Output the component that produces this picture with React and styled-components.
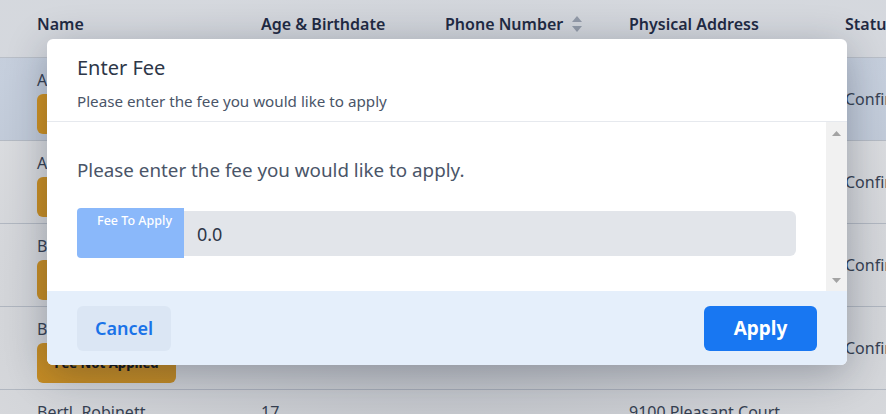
import React from 'react';
import styled, { createGlobalStyle } from 'styled-components';

const GlobalStyle = createGlobalStyle`
    html, body {
        margin: 0;
        padding: 0;
        width: 886px;
        height: 414px;
        overflow: hidden;
        font-family: "Noto Sans", "Open Sans", sans-serif;
        background: #ffffff;
    }
`
const Page = styled.div`
    position: relative;
    width: 886px;
    height: 414px;
    overflow: hidden;
`
const Table = styled.div`
    display: flex;
    flex-direction: column;
    color: #2d3748;
`
const Row = styled.div`
    display: grid;
    grid-template-columns: 224px 184px 184px 216px 1fr;
    padding-left: 37px;
    height: ${p => p.head ? '58px' : '83px'};
    align-items: center;
    background: ${p => p.head ? '#f4f6f9' : p.selected ? '#e2ebf8' : '#ffffff'};
    border-bottom: 1px solid #d3d8df;
    white-space: nowrap;
    box-sizing: border-box;
`
const HeadCell = styled.div`
    font-size: 16px;
    font-weight: 600;
    color: #1f2a44;
    display: flex;
    align-items: center;
    gap: 8px;
    margin-top: -10px;
`
const Cell = styled.div`
    align-self: ${p => p.top ? 'start' : 'center'};
    padding-top: ${p => p.top ? '10px' : '0'};
    display: flex;
    flex-direction: column;
    font-size: 16px;
    line-height: 24px;
    color: #3a4556;
`
const NameCell = styled.div`
    align-self: start;
    padding-top: 10px;
    display: flex;
    flex-direction: column;
    align-items: flex-start;
    gap: 2px;
    font-size: 16px;
    line-height: 24px;
    color: #3a4556;
`
const Badge = styled.span`
    display: inline-block;
    width: 139px;
    line-height: 40px;
    text-align: center;
    background: #f0a51c;
    border-radius: 6px;
    font-size: 13px;
    font-weight: 800;
    color: #111;
`
const SortIcon = styled.svg`
    width: 12px;
    height: 18px;
`
const Overlay = styled.div`
    position: absolute;
    inset: 0;
    background: radial-gradient(ellipse 70% 80% at 50% 75%, rgba(35, 45, 65, 0.32), rgba(35, 45, 65, 0.15));
`
const Modal = styled.div`
    position: absolute;
    left: 47px;
    top: 39px;
    width: 800px;
    height: 326px;
    background: #ffffff;
    border-radius: 6px;
    overflow: hidden;
    display: flex;
    flex-direction: column;
    box-shadow: 0 8px 40px rgba(20, 30, 50, 0.3);
`
const Header = styled.div`
    padding: 14px 30px 0;
    height: 83px;
    box-sizing: border-box;
    border-bottom: 1px solid #e6e9ee;
`
const Title = styled.h2`
    margin: 0;
    font-size: 20px;
    font-weight: 400;
    color: #2d3748;
    line-height: 30px;
`
const Subtitle = styled.p`
    margin: 8px 0 0;
    font-size: 15.2px;
    color: #4a5568;
    line-height: 20px;
`
const Body = styled.div`
    height: 169px;
    display: flex;
`
const BodyContent = styled.div`
    flex: 1;
    padding: 0 30px;
    overflow: hidden;
`
const ScrollTrack = styled.div`
    width: 21px;
    background: #f1f1f1;
    display: flex;
    flex-direction: column;
    justify-content: space-between;
    align-items: center;
    padding: 9px 0 8px;
    box-sizing: border-box;
`
const ScrollArrow = styled.svg`
    width: 9px;
    height: 5px;
    display: block;
`
const Lead = styled.p`
    margin: 34px 0 0;
    font-size: 18.8px;
    color: #4a5568;
    line-height: 28px;
`
const InputGroup = styled.div`
    display: flex;
    align-items: center;
    margin-top: 24px;
`
const GroupLabel = styled.label`
    width: 107px;
    height: 50px;
    box-sizing: border-box;
    background: #8ab8fa;
    color: #ffffff;
    border-radius: 4px 0 0 4px;
    font-size: 12.5px;
    font-weight: 500;
    text-align: right;
    padding: 4px 12px 0 0;
`
const FeeInput = styled.input`
    flex: 1;
    height: 45px;
    box-sizing: border-box;
    border: none;
    border-radius: 0 6px 6px 0;
    background: #e2e5ea;
    font-family: inherit;
    font-size: 18px;
    color: #2d3748;
    padding: 2px 13px 0;
    outline: none;
`
const Footer = styled.div`
    flex: 1;
    background: #e5effb;
    display: flex;
    justify-content: space-between;
    align-items: center;
    padding: 0 30px;
`
const Button = styled.button`
    height: 45px;
    width: ${p => p.primary ? '113px' : '94px'};
    border: none;
    border-radius: 6px;
    font-family: inherit;
    font-size: ${p => p.primary ? '19px' : '18px'};
    font-weight: ${p => p.primary ? 700 : 600};
    color: ${p => p.primary ? '#ffffff' : '#1a73e8'};
    background: ${p => p.primary ? '#1877f2' : '#dbe6f4'};
    cursor: pointer;
`

const rows = [
    { name: 'Abbe, Marlow', age: '17', birth: '02/11/2007', phone: '(555) 201-4432', address: '41 Elm Street', city: 'Springfield, IL', status: 'Confirmed', selected: true },
    { name: 'Adler, Kirsten', age: '16', birth: '09/23/2008', phone: '(555) 318-9021', address: '7 Harbor Lane', city: 'Springfield, IL', status: 'Confirmed' },
    { name: 'Baird, Jolene', age: '17', birth: '05/02/2007', phone: '(555) 774-1209', address: '220 Oak Avenue', city: 'Springfield, IL', status: 'Confirmed' },
    { name: 'Barlow, Terrence', age: '18', birth: '01/17/2006', phone: '(555) 602-3348', address: '15 Birch Road', city: 'Springfield, IL', status: 'Confirmed' },
    { name: 'Bertl, Robinett', age: '17', birth: '11/30/2007', phone: '(555) 980-1156', address: '9100 Pleasant Court', city: 'Springfield, IL', status: 'Confirmed', last: true },
]

function App(){
    return (
        <Page>
            <GlobalStyle />
            <Table>
                <Row head>
                    <HeadCell>Name</HeadCell>
                    <HeadCell>Age &amp; Birthdate</HeadCell>
                    <HeadCell>
                        Phone Number
                        <SortIcon viewBox="0 0 12 18">
                            <path d="M6 1 L11 7 H1 Z" fill="#a8b0bc" />
                            <path d="M6 17 L11 11 H1 Z" fill="#a8b0bc" />
                        </SortIcon>
                    </HeadCell>
                    <HeadCell>Physical Address</HeadCell>
                    <HeadCell>Status</HeadCell>
                </Row>
                {rows.map(r => (
                    <Row key={r.name} selected={r.selected}>
                        <NameCell>
                            {r.name}
                            {!r.last && <Badge>Fee Not Applied</Badge>}
                        </NameCell>
                        <Cell top>
                            <span>{r.age}</span>
                            <span>{r.birth}</span>
                        </Cell>
                        <Cell>{r.phone}</Cell>
                        <Cell top>
                            <span>{r.address}</span>
                            <span>{r.city}</span>
                        </Cell>
                        <Cell>{r.status}</Cell>
                    </Row>
                ))}
            </Table>
            <Overlay />
            <Modal>
                <Header>
                    <Title>Enter Fee</Title>
                    <Subtitle>Please enter the fee you would like to apply</Subtitle>
                </Header>
                <Body>
                    <BodyContent>
                        <Lead>Please enter the fee you would like to apply.</Lead>
                        <InputGroup>
                            <GroupLabel>Fee To Apply</GroupLabel>
                            <FeeInput type='text' defaultValue='0.0' />
                        </InputGroup>
                    </BodyContent>
                    <ScrollTrack>
                        <ScrollArrow viewBox="0 0 9 5">
                            <path d="M0 5 L4.5 0 L9 5 Z" fill="#a3a3a3" />
                        </ScrollArrow>
                        <ScrollArrow viewBox="0 0 9 5">
                            <path d="M0 0 L4.5 5 L9 0 Z" fill="#a3a3a3" />
                        </ScrollArrow>
                    </ScrollTrack>
                </Body>
                <Footer>
                    <Button>Cancel</Button>
                    <Button primary>Apply</Button>
                </Footer>
            </Modal>
        </Page>
    )
}
export default App;
